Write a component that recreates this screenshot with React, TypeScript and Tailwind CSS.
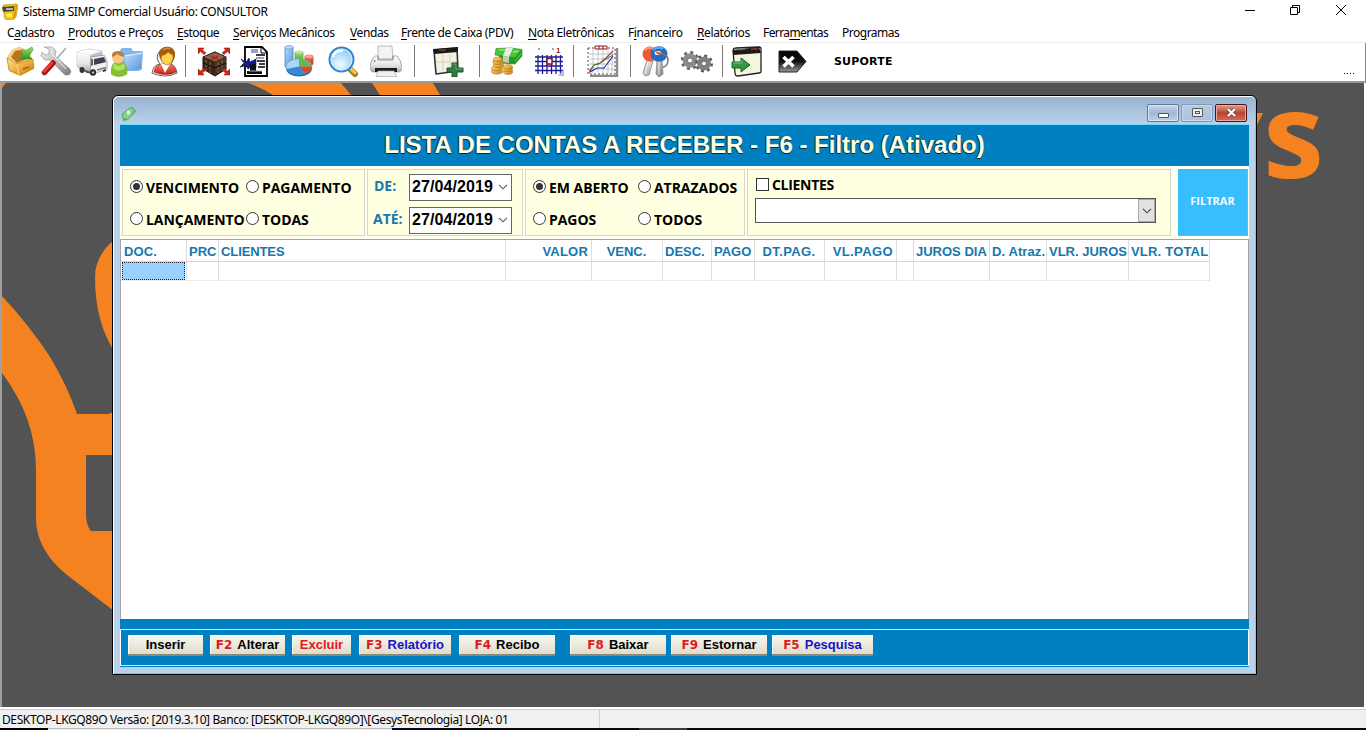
import React from "react";

type Kids = { children?: React.ReactNode };

const Icon = ({ cls, children }: Kids & { cls: string }) => (
  <svg className={`h-8 w-8 shrink-0 ${cls}`} viewBox="0 0 32 32">{children}</svg>
);

const Sep = ({ cls }: { cls: string }) => <span className={`h-8 w-px shrink-0 bg-[#777] ${cls}`} />;

const Gradients = () => (
  <svg className="absolute h-0 w-0">
    <defs>
      <linearGradient id="gold" x1="0" y1="0" x2="1" y2="1"><stop offset="0" stopColor="#ffe79a" /><stop offset=".5" stopColor="#f0b040" /><stop offset="1" stopColor="#b87315" /></linearGradient>
      <linearGradient id="steel" x1="0" y1="0" x2="1" y2="1"><stop offset="0" stopColor="#f6f6f6" /><stop offset=".5" stopColor="#bdbdbd" /><stop offset="1" stopColor="#777" /></linearGradient>
      <linearGradient id="shell" x1="0" y1="0" x2="0" y2="1"><stop offset="0" stopColor="#fff" /><stop offset=".6" stopColor="#e2e2e2" /><stop offset="1" stopColor="#a8a8a8" /></linearGradient>
      <linearGradient id="green" x1="0" y1="0" x2="0" y2="1"><stop offset="0" stopColor="#a5e070" /><stop offset="1" stopColor="#2f9420" /></linearGradient>
      <linearGradient id="blue" x1="0" y1="0" x2="1" y2="1"><stop offset="0" stopColor="#c3dffa" /><stop offset="1" stopColor="#4f93dc" /></linearGradient>
      <linearGradient id="red" x1="0" y1="0" x2="0" y2="1"><stop offset="0" stopColor="#f9846a" /><stop offset="1" stopColor="#c41c10" /></linearGradient>
      <radialGradient id="lens" cx=".45" cy=".7" r=".7"><stop offset="0" stopColor="#f2fcff" /><stop offset="1" stopColor="#83c7f4" /></radialGradient>
      <linearGradient id="ink" x1="0" y1="0" x2="0" y2="1"><stop offset="0" stopColor="#000" /><stop offset=".5" stopColor="#111" /><stop offset="1" stopColor="#999" /></linearGradient>
    </defs>
  </svg>
);

const BoxIcon = () => (
  <Icon cls="ml-[5px]">
    <path d="M2 13 7 5l7-3 10 4 4 10 1 8-14 7-11-5Z" fill="#e8a33c" />
    <path d="M2 13 8 4l7-2 10 5 2 8-15 5Z" fill="#f7cf85" />
    <path d="M6 12 10 6l5-1 8 4-1 5-10 4Z" fill="#b5761e" />
    <path d="M2 13l10 6 16-5 1 9-14 7L4 25Z" fill="url(#gold)" stroke="#c98421" strokeWidth=".7" />
    <path d="M12 19l2 11" stroke="#ffe2a0" strokeWidth=".8" /><path d="M18 24l6-2" stroke="#a9650f" strokeWidth="1.500" />
    <path d="M27 2 20 6l-3-2-1 10 11 0-3-3 4-6Z" fill="url(#green)" stroke="#3c9b35" strokeWidth=".6" />
  </Icon>
);

const ToolsIcon = () => (
  <Icon cls="ml-[3px]">
    <path d="M26 3 13 18" stroke="#aaa" strokeWidth="1.600" />
    <path d="M4 2l5 2v5l-4 1-3-3-1 4 4 4 5 0 15 15 4 0 2-3-1-3L15 11l1-5-4-4Z" fill="url(#steel)" stroke="#999" strokeWidth=".7" />
    <path d="M11 6l2 4 13 14" stroke="#fff" strokeWidth="1" fill="none" />
    <path d="M13 18 4.500 27.500" stroke="#a31313" strokeWidth="5.500" strokeLinecap="round" />
    <path d="M12 18 4 26.500" stroke="#ef3a3a" strokeWidth="2.600" strokeLinecap="round" />
  </Icon>
);

const TruckIcon = () => (
  <Icon cls="ml-[4px]">
    <path d="M1 7 13 4l13 2v16l-11 6L1 21Z" fill="#c2c4c9" stroke="#aaa" strokeWidth=".6" />
    <path d="M1 7 13 4l13 2-12 4Z" fill="#fbfbfb" />
    <path d="M1 7l13 3v17L1 21Z" fill="url(#shell)" />
    <path d="M15 12l13-2 3 6v8l-14 5-3-2Z" fill="#f0f0f0" stroke="#888" strokeWidth=".7" />
    <path d="M18 14l10-2 2 5-12 3Z" fill="#3c424d" />
    <path d="M15 14l2 0v6l-2 1Z" fill="#5b6370" />
    <path d="M1 22l14 5 2 2-6-1Z" fill="#555" />
    <ellipse cx="6" cy="25" rx="2.500" ry="3" fill="#333" /><ellipse cx="17" cy="27.500" rx="3" ry="3.300" fill="#222" /><circle cx="17" cy="27.500" r="1.300" fill="#bbb" />
    <path d="M21 25l9-2.500" stroke="#777" strokeWidth="1.500" /><circle cx="22" cy="22.500" r="1" fill="#ff9" /><path d="M27 27l3-1v-2l-3 1z" fill="#333" />
  </Icon>
);

const FolderUserIcon = () => (
  <Icon cls="ml-[3px]">
    <path d="M9 5l2-2h9l2 3h9v18l-3 2H14Z" fill="#80b7ec" />
    <path d="M13 10 32 7l-2 17-15 2Z" fill="url(#blue)" stroke="#7caee0" strokeWidth=".5" />
    <path d="M14 11l17-3" stroke="#e5f3ff" />
    <path d="M0 29q0-13 8-13t8 13q-8 5-16 0Z" fill="#83c332" stroke="#6aaa23" strokeWidth=".6" />
    <path d="M3 18q5 6 10 0l1 5q-6 5-12 0Z" fill="#b2e065" />
    <circle cx="7" cy="12.500" r="6" fill="#f7c68a" /><path d="M1 12Q0 6 7 6t6 6q-5-1-7-3-2 3-5 3Z" fill="#b9803c" />
  </Icon>
);

const PersonIcon = () => (
  <Icon cls="ml-[6px]">
    <path d="M3 28q1-8 8-9-5-6-1-12 5-7 12-4 6 4 2 12-1 3-2 4 5 2 6 9-12 6-25 0Z" fill="#f4f4f4" stroke="#555" strokeWidth=".9" />
    <path d="M5 27q1-7 8-8h6q7 1 8 8-10 5-22 0Z" fill="url(#red)" stroke="#a70f0f" strokeWidth=".6" />
    <path d="M12 19l4 9 5-9Z" fill="#fff" />
    <path d="M10 10Q10 2 18 2t8 8q-1 6-4 8h-7q-4-3-5-8Z" fill="#a95a12" />
    <path d="M13 10q3 1 6-3l3 2 2 1q1 8-6 10-5-1-6-7Z" fill="#ffd34a" stroke="#8a4b0b" strokeWidth=".5" />
    <path d="M14 5q3-3 7-1" stroke="#d08a3c" strokeWidth="1.400" fill="none" />
  </Icon>
);

const CrateIcon = () => (
  <Icon cls="ml-[12px]">
    <path d="M5 12 17 7l11 5v12l-11 7L5 24Z" fill="#3a2718" stroke="#111" />
    <path d="M5 12l12-5 11 5-11 5Z" fill="#8a6548" stroke="#222" strokeDasharray="2 1" />
    <path d="M17 17v13l11-7V12Z" fill="#4d3220" /><path d="M8 15v11M12 17v11M20 17v11M24 15v10" stroke="#8f6a4e" strokeDasharray="3 1.500" /><path d="M5 18l12 5 11-5" stroke="#111" fill="none" />
    <path d="M13 11l7 3m-7 1 7-4" stroke="#c01d1d" strokeWidth="1.500" />
    <g fill="#d52816" stroke="#7a150d" strokeWidth=".5"><path d="M0 3h6L4.500 5 8 8 6 9.500 2.500 6.500 0 9Z" /><path d="M32 3h-6l1.500 2L24 8l2 1.500 3.500-3L32 9Z" /><path d="M0 30h6l-1.500-2L8 25l-2-2-3.500 3L0 24Z" /><path d="M32 30h-6l1.500-2-3.500-3 2-2 3.500 3L32 24Z" /></g>
  </Icon>
);

const DocIcon = () => (
  <Icon cls="ml-[9px]">
    <path d="M6 2h17l5 5v24H6Z" fill="#fff" stroke="#000" strokeWidth="1.800" /><path d="M22 2v6h6" fill="none" stroke="#000" />
    <path d="M12 5h7M12 7h7M17 13h8" stroke="#333da5" /><path d="M17 10h9M18 16h8M20 19h6M19 22h7" stroke="#000" strokeWidth="1.500" />
    <path d="M2 14l5 3 3-4 1 4 6-3v9l-5-1-3 2-2-3-6 1 4-4Z" fill="#101b9c" stroke="#000" strokeDasharray="1 1" />
    <path d="M11 19h6v7h6v3H8v-3h3Z" fill="#0d0d18" /><path d="M10 26h13" stroke="#aaa" />
  </Icon>
);

const ChartIcon = () => (
  <Icon cls="ml-[12px]">
    <path d="M2 2q4-2 8 0v20H2Z" fill="url(#blue)" stroke="#4b7ecb" strokeWidth=".8" /><ellipse cx="6" cy="2.300" rx="4" ry="1.700" fill="#c5dcff" stroke="#4b7ecb" strokeWidth=".5" />
    <path d="M12 7q4-2 8 0v14h-8Z" fill="url(#green)" stroke="#5fae48" strokeWidth=".8" /><ellipse cx="16" cy="7" rx="4" ry="1.500" fill="#c2e8a0" />
    <path d="M22 11q4-2 8 0v8l-4 3h-4Z" fill="url(#red)" stroke="#c9402a" strokeWidth=".8" /><ellipse cx="26" cy="11.500" rx="4" ry="1.500" fill="#f8a58d" />
    <ellipse cx="16" cy="23.500" rx="13" ry="8" fill="#2a6cb4" /><ellipse cx="16" cy="21.500" rx="13" ry="7.800" fill="#a9d7f2" stroke="#5b94ca" strokeWidth=".6" />
    <path d="M16 21.500V14q11 0 13 7.500Z" fill="#63b84f" /><path d="M16 21.500h13q0 5-7 7Z" fill="#dd4a22" /><path d="M16 21.500l6 7Q8 31 3.500 24Z" fill="#2f8cd2" />
  </Icon>
);

const LensIcon = () => (
  <Icon cls="ml-[12px]">
    <path d="m22 23 6 6" stroke="#a97b14" strokeWidth="6" strokeLinecap="round" /><path d="m22 22 6 6" stroke="#f3cc4c" strokeWidth="3" strokeLinecap="round" /><path d="m20 22 4-3" stroke="#8ba0aa" strokeWidth="2" />
    <circle cx="14.500" cy="14.500" r="12" fill="url(#lens)" stroke="#3182cf" strokeWidth="2" /><circle cx="14.500" cy="14.500" r="10.500" fill="none" stroke="#d5f0ff" /><path d="M6 12q2-7 10-6" stroke="#fff" strokeWidth="2" fill="none" />
  </Icon>
);

const PrinterIcon = () => (
  <Icon cls="ml-[11px]">
    <path d="M8 1h14l1 14H8Z" fill="#f3f3f3" stroke="#a0a0a0" strokeWidth=".7" />
    <path d="M5 11h3v3h15v-3h4q4 4 5 11 0 5-4 5H4q-4 0-4-5 1-8 5-11Z" fill="url(#shell)" stroke="#888" strokeWidth=".7" />
    <path d="M8 11v4h15v-4" fill="none" stroke="#888" strokeWidth=".8" /><circle cx="4.500" cy="16" r="1" fill="#4aad3b" /><path d="M5 23h22v4H5Z" fill="#1c1c1c" /><path d="M8 26h16l3 5.500H6Z" fill="#f0f0f0" stroke="#aaa" strokeWidth=".7" />
  </Icon>
);

const CalendarPlusIcon = () => (
  <Icon cls="ml-[17px]">
    <path d="M2 5 25 3l1 23-22 3Z" fill="#f3f2e2" stroke="#333" strokeWidth="1.600" strokeLinejoin="round" /><path d="M1 4l25-2v5L2 9Z" fill="#1a1714" /><path d="M7 5h7" stroke="#a4502f" /><path d="M11 10v17M18 9v17M4 17h20" stroke="#d3d2bd" />
    <path d="M20 18h5v5h6v4h-6v5h-5v-5h-5v-4h5Z" fill="#327c3c" stroke="#18562a" /><path d="M21 19h3v5h6" stroke="#64aa68" fill="none" />
  </Icon>
);

const MoneyIcon = () => (
  <Icon cls="ml-[11px]">
    <path d="M8 10 31 5v6l-7 8-14-1Z" fill="#249a1e" stroke="#157a15" strokeWidth=".6" /><path d="M5 3.500 20 3l11 1.500-7 8L4 10Z" fill="#4cc43c" stroke="#2c9b28" strokeWidth=".7" /><path d="M8 5l8-.5M22 7l5-1" stroke="#b5ee9c" strokeWidth="1.200" />
    <path d="M15 3h7l-4 9-6-1Z" fill="#e6ece2" /><path d="M12 11l6 1v6l-6-1Z" fill="#c3cdbd" /><path d="m24 16 7-8" stroke="#8edb7a" strokeWidth=".8" />
    <g fill="url(#gold)" stroke="#b07a16" strokeWidth=".7"><ellipse cx="17" cy="27" rx="4.500" ry="2.300" /><ellipse cx="17" cy="24.500" rx="4.500" ry="2.300" /><ellipse cx="17" cy="22" rx="4.500" ry="2.300" /><ellipse cx="6" cy="26.500" rx="5.500" ry="2.600" /><ellipse cx="6" cy="23.500" rx="5.500" ry="2.600" /><ellipse cx="7.500" cy="20" rx="5" ry="2.600" /><ellipse cx="7" cy="17" rx="5" ry="2.600" /><ellipse cx="7" cy="14.500" rx="4.500" ry="2.300" /></g>
  </Icon>
);

const GridIcon = () => (
  <Icon cls="ml-[11px]">
    <path d="M1 12h28M1 16.500h28M1 21h28M1 25.500h28M4 10v19M8.500 10v19M13 10v19M17.500 10v19M22 10v19M26.500 10v19" stroke="#1b1b9b" strokeWidth="1.300" />
    <rect x="13" y="13.500" width="5" height="5.500" fill="#fff" stroke="#8c1540" strokeWidth="1.600" /><path d="m24 31 6-7v7Z" fill="#bbb" /><path d="M5 3v2M19 3v2" stroke="#555" /><text x="22" y="8" fontFamily="Liberation Sans" fontWeight="bold" fontSize="8" fill="#a31c1c">1</text>
  </Icon>
);

const GraphIcon = () => (
  <Icon cls="ml-[20px]">
    <path d="M30 3v28H3" stroke="#8b8b8b" strokeWidth="2.400" fill="none" /><rect x="1" y="3" width="27" height="26" fill="#fff" stroke="#222" strokeWidth=".8" strokeDasharray="2 2" />
    <path d="M6 4v24M11 4v24M16 4v24M21 4v24M25 4v24M2 9h25M2 14h25M2 19h25M2 24h25" stroke="#b8b8b8" strokeWidth=".8" />
    <path d="M8 1h12v3H8Z" fill="#fff" stroke="#8c1717" /><path d="M12 1v3m4-3v3" stroke="#8c1717" />
    <path d="m2 28 5-8 6-2 6-5 7-7" stroke="#c83232" fill="none" strokeWidth="1.100" /><path d="m2 26 5-6 5-1 7-5 7-4" stroke="#27852f" fill="none" /><path d="m3 27 7-4h7l9-12" stroke="#2424a7" fill="none" strokeWidth="1.100" />
  </Icon>
);

const KeysIcon = () => (
  <Icon cls="ml-[9px]">
    <path d="M7 15 3 28l2 3 4-1 4-14ZM17 15l-1 14 3 3 4-3-1-14Z" fill="url(#steel)" stroke="#888" strokeWidth=".8" /><path d="m8 17-3 12M19 16v14" stroke="#eee" />
    <circle cx="10" cy="9" r="7.500" fill="#ef5c2b" /><path d="M5 5q4-4 9-1" stroke="#ff9a77" strokeWidth="2" fill="none" />
    <ellipse cx="19" cy="9" rx="8.500" ry="7.800" fill="#236bc5" /><path d="M13 5q5-4 10-1" stroke="#65a7ed" strokeWidth="2" fill="none" /><ellipse cx="18" cy="8" rx="3.500" ry="2" fill="#fff" /><path d="M18 8q11 1 10 8-1 6-5 6" stroke="#777" strokeWidth="1.500" fill="none" /><path d="m16 7 5 3" stroke="#e35426" strokeWidth="1.600" />
  </Icon>
);

const GearsIcon = () => (
  <Icon cls="ml-[9px]">
    <circle cx="9" cy="15.500" r="8" fill="none" stroke="#666" strokeWidth="3" strokeDasharray="3 3.280" /><circle cx="9" cy="15.500" r="5" fill="#fff" stroke="#8b8b8b" strokeWidth="4.500" /><circle cx="9" cy="15.500" r="2.600" fill="#fff" stroke="#444" strokeWidth=".8" />
    <circle cx="23" cy="18.500" r="7.500" fill="none" stroke="#555" strokeWidth="3" strokeDasharray="2.800 3.090" /><circle cx="23" cy="18.500" r="4.700" fill="#fff" stroke="#808080" strokeWidth="4.500" /><circle cx="23" cy="18.500" r="2.400" fill="#fff" stroke="#444" strokeWidth=".8" />
  </Icon>
);

const WindowArrowIcon = () => (
  <Icon cls="ml-[8px]">
    <path d="M2 6q0-3 3-3l23-1q2 0 2 2v22q0 2-2 2L7 31q-3 0-3-3Z" fill="#f3f5dc" stroke="#222" strokeWidth="1.300" /><path d="m2 5 26-3 2 6L2 10Z" fill="#1c1917" /><path d="M20 4h7" stroke="#b84c3e" /><path d="M7 5l8-1" stroke="#727272" />
    <path d="M1 17h9v-4l9 7-9 7v-4H1Z" fill="#339743" stroke="#176328" /><path d="M2 18h9v-3" stroke="#78c77f" fill="none" />
  </Icon>
);

const ExitIcon = () => (
  <Icon cls="ml-[13px]">
    <path d="M3 6h18l9 10.500L21 27H3Z" fill="url(#ink)" stroke="#222" /><path d="m7.500 12 10 9.500m0-9.500-10 9.500" stroke="#fff" strokeWidth="3.600" />
  </Icon>
);

const MenuItem = ({ cls, a = "", u, b }: { cls: string; a?: string; u: string; b: string }) => (
  <span className={`shrink-0 whitespace-nowrap ${cls}`}>{a}<span className="underline underline-offset-2">{u}</span>{b}</span>
);

const Radio = ({ on, children }: Kids & { on?: boolean }) => (
  <label className="flex h-8 items-center whitespace-nowrap tracking-[-0.05px]">
    <span className="mb-px mr-[3px] flex h-[13px] w-[13px] shrink-0 items-center justify-center rounded-full border border-[#333] bg-white">
      {on && <span className="h-[7px] w-[7px] rounded-full bg-[#333]" />}
    </span>
    {children}
  </label>
);

const DateBox = () => (
  <div className="flex h-[27px] w-[103px] items-center border border-[#666] bg-white pb-px pl-[2px] font-['Liberation_Sans',sans-serif] text-[16px] font-bold">
    <span className="w-[86px] leading-[24px] tracking-[0.1px]">27/04/2019</span>
    <svg className="h-[6px] w-[10px]" viewBox="0 0 10 6"><path d="m1 .8 4 4 4-4" fill="none" stroke="#555" strokeWidth="1.100" /></svg>
  </div>
);

const Col = ({ cls, text = "", track = "tracking-[0px]" }: { cls: string; text?: string; track?: string }) => (
  <div className={`h-[41px] shrink-0 border-r border-[#dcdcdc] ${cls}`}>
    <div className={`h-[22px] whitespace-nowrap border-b border-[#d5d5d5] pl-[2px] pr-[3px] leading-[23px] ${track}`}>{text}</div>
    <div className="h-[19px] border-b border-[#ececec]" />
  </div>
);

const Btn = ({ cls, k, t, color = "text-black" }: { cls: string; k?: string; t: string; color?: string }) => (
  <button className={`flex h-[21px] shrink-0 items-center justify-center gap-[5px] whitespace-nowrap border-b-2 border-[#8c8a76] bg-linear-to-b from-[#f8f8f0] to-[#dfdccb] text-[13px] font-bold shadow-[inset_1px_1px_0_#fff] ${cls}`}>
    {k && <span className="font-['DejaVu_Sans',sans-serif] text-[12px] text-[#dc1a22]">{k}</span>}
    <span className={color}>{t}</span>
  </button>
);

const Backdrop = () => (
  <svg className="absolute inset-0 h-[624px] w-[1362px]" viewBox="2 83 1362 624">
    <g fill="#f58220">
      <path d="M2 83h4l-4 5ZM248 83h93l10 12h-78q-11-7-25-12ZM372 83h61l7 12h-60Z" />
      <path d="M114 240q-19 16-19 37 0 44 19 74Z" />
      <path d="M2 296q28 30 48 61 17 28 27 57h31l6-2v43H86v60q0 10 5 16h23v80L67 575q-31-25-31-57v-48Q36 418 2 373Z" />
      <path d="M1255 113h8l-8 16Z" />
      <text x="1263" y="178" fontFamily="Open Sans, sans-serif" fontWeight="bold" fontSize="119" textLength="61" lengthAdjust="spacingAndGlyphs">s</text>
    </g>
  </svg>
);

const FinanceWindow = () => (
  <section className="absolute left-[110px] top-[12px] flex h-[580px] w-[1145px] flex-col rounded-t-[6px] border border-black bg-[#b9d1ea] shadow-[inset_1px_1px_0_#fff,inset_-1px_-1px_0_#5cd0f5]">
    <div className="mx-px mt-px flex h-[27px] shrink-0 rounded-t-[5px] bg-linear-to-b from-[#99b4d1] to-[#b9d1ea] pl-[7px] pr-[8px]">
      <svg className="mt-[8px] h-4 w-4" viewBox="0 0 16 16"><path d="m2 11 9-9 5 5-9 8-5 1Z" fill="#5aa868" /><path d="m1 9 9-7 4 4-8 8-4 0Z" fill="#86ce8c" stroke="#4f9e62" strokeWidth=".8" /><path d="m6 14 9-7M8 15l7-5" stroke="#c6ecc4" strokeWidth=".7" /><ellipse cx="7.500" cy="7.500" rx="1.700" ry="2.200" fill="#e6f8e0" /></svg>
      <div className="ml-auto mt-[7px] flex gap-[2px]">
        <span className="flex h-[18px] w-[32px] items-center justify-center rounded-[2px] border border-[#5f7795] bg-linear-to-b from-[#c7d7e9] via-[#a1b8d2] to-[#bdd2e9] shadow-[inset_0_0_0_1px_#dbe7f3]"><span className="mt-1 h-[5px] w-[11px] rounded-[1px] border border-[#555] bg-white" /></span>
        <span className="flex h-[18px] w-[32px] items-center justify-center rounded-[2px] border border-[#8098b5] bg-linear-to-b from-[#b8cbe0] to-[#abc2dc] shadow-[inset_0_0_0_1px_#c9d9ea]"><span className="mb-px flex h-[9px] w-[11px] items-center justify-center rounded-[1px] border border-[#555] bg-[#e8eef5]"><span className="h-[3px] w-[5px] border border-[#555]" /></span></span>
        <span className="flex h-[18px] w-[32px] items-center justify-center rounded-[2px] border border-[#4d1512] bg-linear-to-b from-[#e09b8c] via-[#bd4334] to-[#cf6d5b] shadow-[inset_0_0_0_1px_#e8aaa0]"><svg className="mb-px h-[9px] w-[11px]" viewBox="0 0 11 9"><path d="m2 1 7 7m0-7L2 8" stroke="#444" strokeWidth="3.600" /><path d="m2 1 7 7m0-7L2 8" stroke="#fff" strokeWidth="2.300" /></svg></span>
      </div>
    </div>
    <div className="ml-[7px] mr-[7px] h-px shrink-0 bg-[#73dcfb]" />
    <div className="ml-[7px] mr-[7px] flex h-[542px] flex-col bg-white">
      <h1 className="flex h-[41px] shrink-0 items-center justify-center bg-[#0080c0] pb-[2px] font-['Liberation_Sans',sans-serif] text-[24px] font-bold text-[#ffffe1] [text-shadow:-1px_0_0_#002b3f,0_1px_0_#002b3f]"><span className="whitespace-nowrap">LISTA DE CONTAS A RECEBER - F6 - Filtro (Ativado)</span></h1>
      <div className="flex h-[74px] shrink-0 border-b border-[#a5a5a5] bg-[#fffff2] pl-[2px] pt-[3px] font-['Open_Sans',sans-serif] text-[14px] font-bold text-black">
        <div className="mr-[2px] grid h-[67px] w-[243px] grid-cols-[116px_110px] content-start border border-[#d8d8c4] bg-[#ffffe1] pl-[7px] pt-px">
          <Radio on>VENCIMENTO</Radio><Radio>PAGAMENTO</Radio>
          <Radio>LANÇAMENTO</Radio><Radio>TODAS</Radio>
        </div>
        <div className="mr-[2px] grid h-[67px] w-[156px] grid-cols-[35px_103px] content-start gap-y-[6px] border border-[#d8d8c4] bg-[#ffffe1] pl-[6px] pt-[4px] text-[#1777ad]">
          <span className="leading-[23px]">DE:</span><div className="text-black"><DateBox /></div>
          <span className="-ml-px leading-[23px]">ATÉ:</span><div className="text-black"><DateBox /></div>
        </div>
        <div className="mr-[2px] grid h-[67px] w-[220px] grid-cols-[105px_100px] content-start border border-[#d8d8c4] bg-[#ffffe1] pl-[7px] pt-px">
          <Radio on>EM ABERTO</Radio><Radio>ATRAZADOS</Radio>
          <Radio>PAGOS</Radio><Radio>TODOS</Radio>
        </div>
        <div className="mr-[7px] h-[67px] w-[424px] border border-[#d8d8c4] bg-[#ffffe1] pl-[7px] pt-[5px]">
          <label className="flex h-[18px] items-center gap-[3px] pl-px tracking-[-0.3px]"><span className="h-[13px] w-[13px] border border-[#333] bg-white" />CLIENTES</label>
          <div className="mt-[5px] flex h-[25px] w-[401px] border border-[#555] bg-white"><span className="ml-auto flex w-[17px] items-center justify-center border border-[#aaa] bg-[#e1e1e1]"><svg className="h-[6px] w-[10px]" viewBox="0 0 10 6"><path d="m1 .8 4 4 4-4" fill="none" stroke="#444" strokeWidth="1.100" /></svg></span></div>
        </div>
        <button className="h-[67px] w-[70px] border-b border-r border-[#a5a5a5] bg-[#38bdff] pb-[2px] text-[11px] font-bold text-[#f4fbff]">FILTRAR</button>
      </div>
      <div className="flex h-[379px] shrink-0 border-x border-[#a5a5a5] bg-white font-['Liberation_Sans',sans-serif] text-[13px] font-bold text-[#1777ad]">
        <div className="h-[41px] w-[66px] shrink-0 border-r border-[#dcdcdc]">
          <div className="h-[22px] border-b border-[#d5d5d5] pl-[3px] leading-[23px] tracking-[0.1px]">DOC.</div>
          <div className="h-[19px] border-b border-[#ececec]"><div className="mx-px h-[18px] border border-dotted border-[#223] bg-[#99d1ff]" /></div>
        </div>
        <Col cls="w-[32px]" text="PRC" />
        <Col cls="w-[287px]" text="CLIENTES" track="tracking-[-0.1px]" />
        <Col cls="w-[86px] text-right" text="VALOR" track="tracking-[0.2px]" />
        <Col cls="w-[71px] text-center" text="VENC." />
        <Col cls="w-[49px]" text="DESC." />
        <Col cls="w-[43px]" text="PAGO" />
        <Col cls="w-[70px] text-center" text="DT.PAG." track="tracking-[0.4px]" />
        <Col cls="w-[72px] text-right" text="VL.PAGO" track="tracking-[0.4px]" />
        <Col cls="w-[17px]" />
        <Col cls="w-[76px]" text="JUROS DIA" />
        <Col cls="w-[57px]" text="D. Atraz." track="tracking-[0.1px]" />
        <Col cls="w-[82px]" text="VLR. JUROS" />
        <Col cls="w-[81px]" text="VLR. TOTAL" track="tracking-[0.2px]" />
      </div>
      <div className="h-[11px] shrink-0 border-b border-[#d7edf8] bg-[#0080c0]" />
      <div className="mx-px flex h-[36px] shrink-0 border-b border-[#d7edf8] bg-[#0080c0] pl-[7px] pt-[5px] font-['Liberation_Sans',sans-serif]">
        <Btn cls="w-[75px]" t="Inserir" />
        <Btn cls="ml-[7px] w-[75px]" k="F2" t="Alterar" />
        <Btn cls="ml-[7px] w-[59px]" t="Excluir" color="text-[#e01b1b]" />
        <Btn cls="ml-[8px] w-[92px]" k="F3" t="Relatório" color="text-[#1a12c8]" />
        <Btn cls="ml-[8px] w-[96px]" k="F4" t="Recibo" />
        <Btn cls="ml-[15px] w-[96px]" k="F8" t="Baixar" />
        <Btn cls="ml-[5px] w-[96px]" k="F9" t="Estornar" />
        <Btn cls="ml-[5px] w-[101px]" k="F5" t="Pesquisa" color="text-[#1a12c8]" />
      </div>
      <div className="h-px bg-[#0080c0]" />
    </div>
  </section>
);

export default function App() {
  return (
    <main className="flex h-[730px] w-[1366px] flex-col overflow-hidden bg-white font-['Noto_Sans',sans-serif] text-[12px] text-black">
      <Gradients />
      <header className="flex h-[24px] shrink-0 items-center">
        <svg className="mb-px ml-[2px] h-[17px] w-[16px]" viewBox="0 0 16 17"><path d="M1 2 14 1l2 1-2 12-3 3H4l-2-3 0-6Z" fill="#f4c40f" stroke="#c09613" strokeWidth=".7" /><path d="M0 4l12-1v5L1 9Z" fill="#4b4a42" /><path d="M4 5h7v2H4Z" fill="#abb6b2" /><path d="m13 2 2-1-1 12-3 3Z" fill="#d89e0a" /><path d="m4 11 6-1v4H5Z" fill="#ffe666" /></svg>
        <span className="ml-[5px] tracking-[-0.37px]">Sistema SIMP Comercial Usuário: CONSULTOR</span>
        <div className="ml-auto flex items-center pb-[4px]">
          <svg className="h-3 w-3" viewBox="0 0 12 12"><path d="M1 6.500h10" stroke="#000" /></svg>
          <svg className="ml-[33px] h-3 w-3" viewBox="0 0 12 12"><path d="M1.500 3.500h7v7h-7ZM3.500 3.500v-2h7v7h-2" fill="none" stroke="#000" /></svg>
          <svg className="ml-[34px] mr-[19px] h-3 w-3" viewBox="0 0 12 12"><path d="m1 1 10 10m0-10L1 11" stroke="#000" /></svg>
        </div>
      </header>
      <nav className="flex h-[18px] shrink-0 pl-[7px] leading-[18px] tracking-[-0.4px]">
        <MenuItem cls="w-[61px]" a="C" u="a" b="dastro" />
        <MenuItem cls="w-[109px]" u="P" b="rodutos e Preços" />
        <MenuItem cls="w-[56px] tracking-[-0.5px]" u="E" b="stoque" />
        <MenuItem cls="w-[117px]" u="S" b="erviços Mecânicos" />
        <MenuItem cls="w-[51px]" u="V" b="endas" />
        <MenuItem cls="w-[127px]" u="F" b="rente de Caixa (PDV)" />
        <MenuItem cls="w-[100px]" u="N" b="ota Eletrônicas" />
        <MenuItem cls="w-[69px]" a="F" u="i" b="nanceiro" />
        <MenuItem cls="w-[66px]" u="R" b="elatórios" />
        <MenuItem cls="w-[79px] tracking-[-0.6px]" a="Ferra" u="m" b="entas" />
        <MenuItem cls="tracking-[-0.5px]" a="Pro" u="g" b="ramas" />
      </nav>
      <div className="flex h-[39px] shrink-0 border-t border-[#ececec] pt-[2px]">
        <BoxIcon /><ToolsIcon /><TruckIcon /><FolderUserIcon /><PersonIcon />
        <Sep cls="ml-[4px]" />
        <CrateIcon /><DocIcon /><ChartIcon /><LensIcon /><PrinterIcon />
        <Sep cls="ml-[12px]" />
        <CalendarPlusIcon />
        <Sep cls="ml-[15px]" />
        <MoneyIcon /><GridIcon />
        <Sep cls="ml-[7px]" />
        <span className="-ml-[7px]" /><GraphIcon />
        <Sep cls="ml-[11px]" />
        <KeysIcon /><GearsIcon />
        <Sep cls="ml-[9px]" />
        <WindowArrowIcon /><ExitIcon />
        <span className="ml-[26px] font-['DejaVu_Sans',sans-serif] text-[11px] font-bold leading-[34px] tracking-[0.2px]">SUPORTE</span>
        <span className="ml-auto mr-[9px] mt-[28px] h-px w-[12px] bg-[repeating-linear-gradient(90deg,#000_0_1px,transparent_1px_3px)]" />
        <span className="-mt-[2px] w-px bg-[#888]" />
      </div>
      <div className="flex h-[626px] shrink-0 border-t-2 border-[#999]">
        <div className="w-[2px] bg-[#a0a0a0]" />
        <div className="relative h-[624px] w-[1362px] overflow-hidden bg-[#535353]">
          <Backdrop />
          <FinanceWindow />
        </div>
      </div>
      <footer className="flex h-[23px] shrink-0 flex-col border-t-2 border-white bg-[#f0f0f0]">
        <div className="flex h-[19px] border-t border-[#cfcfcf] leading-[19px] tracking-[-0.39px]">
          <span className="w-[597px] whitespace-nowrap pl-[2px]">DESKTOP-LKGQ89O Versão: [2019.3.10] Banco: [DESKTOP-LKGQ89O]\[GesysTecnologia] LOJA: 01</span>
          <span className="ml-[2px] w-px bg-[#d0d0d0]" />
        </div>
        <div className="flex h-[2px]">
          <span className="w-[48px] bg-black" /><span className="w-[344px] border-t border-[#bbb]" /><span className="w-[247px] bg-[#05080f]" /><span className="w-[48px] bg-[#343a45]" /><span className="flex-1 bg-[#05080f]" />
        </div>
      </footer>
    </main>
  );
}
